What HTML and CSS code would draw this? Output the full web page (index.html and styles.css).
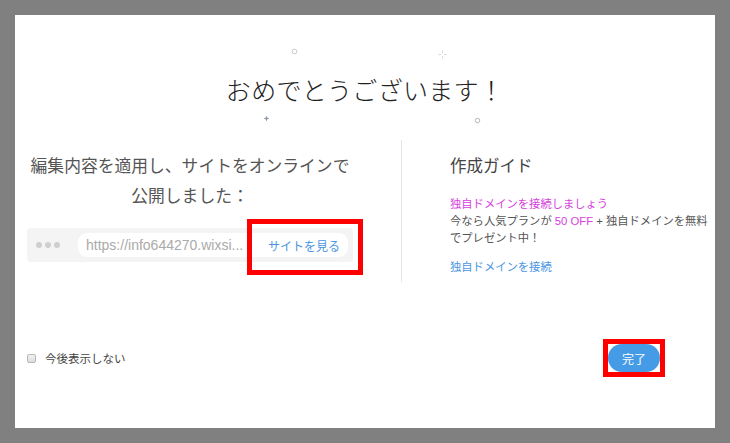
FILE: index.html
```html
<!DOCTYPE html>
<html lang="ja">
<head>
<meta charset="utf-8">
<link rel="stylesheet" href="styles.css">
</head>
<body>
<div class="dialog">
  <div class="title-wrap">
    <h1 class="title">おめでとうございます！</h1>
    <svg class="deco deco-c1" width="7" height="7" viewBox="0 0 7 7"><circle cx="3.5" cy="3.5" r="2.3" fill="none" stroke="#c8c8c8" stroke-width="1"/></svg>
    <svg class="deco deco-s1" width="9" height="9" viewBox="0 0 9 9"><path d="M4.5 0.5 V3 M4.5 6 V8.5 M0.5 4.5 H3 M6 4.5 H8.5" stroke="#d8d8d8" stroke-width="1"/></svg>
    <svg class="deco deco-p1" width="7" height="7" viewBox="0 0 7 7"><path d="M3.5 0.5 L4.3 2.7 L6.5 3.5 L4.3 4.3 L3.5 6.5 L2.7 4.3 L0.5 3.5 L2.7 2.7 Z" fill="#8a95a8"/></svg>
    <svg class="deco deco-c2" width="7" height="7" viewBox="0 0 7 7"><circle cx="3.5" cy="3.5" r="2.2" fill="none" stroke="#b5b5b5" stroke-width="1"/></svg>
  </div>
  <div class="columns">
    <div class="col-left">
      <p class="published">編集内容を適用し、サイトをオンラインで<br>公開しました：</p>
      <div class="urlbar">
        <div class="dots"><span></span><span></span><span></span></div>
        <div class="pill">
          <span class="url">https://info644270.wixsi...</span>
          <span class="view">サイトを見る</span>
        </div>
        <div class="mark mark-view"></div>
      </div>
    </div>
    <div class="col-right">
      <h2 class="guide">作成ガイド</h2>
      <p class="promo"><span class="pink">独自ドメインを接続しましょう</span><br>今なら人気プランが <span class="pink">50 OFF</span> + 独自ドメインを無料<br>でプレゼント中！</p>
      <a class="link">独自ドメインを接続</a>
    </div>
  </div>
  <div class="footer">
    <label class="check"><span class="box"></span>今後表示しない</label>
    <div class="done-wrap">
      <button class="done">完了</button>
      <div class="mark mark-done"></div>
    </div>
  </div>
</div>
</body>
</html>
```
FILE: styles.css
```css
* { box-sizing: border-box; }
html, body { margin: 0; padding: 0; }
body {
  background: #808080;
  width: 730px;
  height: 443px;
  overflow: hidden;
  font-family: "Liberation Sans", "Noto Sans CJK JP", sans-serif;
}
.dialog {
  margin: 15px;
  width: 700px;
  height: 413px;
  background: #fff;
  position: relative;
  display: flex;
  flex-direction: column;
}
.title-wrap {
  position: relative;
  padding-top: 56px;
  height: 125px;
}
.title {
  margin: 0;
  text-align: center;
  font-family: "Noto Sans CJK JP", sans-serif;
  font-weight: 300;
  font-size: 25px;
  line-height: 36px;
  color: #222;
  letter-spacing: 0.3px;
}
.deco { position: absolute; }
.deco-c1 { left: 276px; top: 33px; }
.deco-s1 { left: 423px; top: 35px; }
.deco-p1 { left: 248px; top: 100px; }
.deco-c2 { left: 459px; top: 102px; }

.columns {
  display: flex;
  height: 142px;
}
.col-left {
  width: 386px;
  padding: 10px 48px 0 12px;
}
.published {
  margin: 0;
  text-align: center;
  font-family: "Noto Sans CJK JP", sans-serif;
  font-size: 16.8px;
  line-height: 30px;
  color: #555;
  white-space: nowrap;
}
.urlbar {
  position: relative;
  margin-top: 18px;
  height: 34px;
  width: 326px;
  background: #f4f4f4;
  border-radius: 4px;
  display: flex;
  align-items: center;
  padding: 0 6px 0 8px;
}
.dots { display: flex; gap: 3px; width: 43px; padding-left: 1px; flex-shrink: 0; }
.dots span { width: 6px; height: 6px; border-radius: 50%; background: #cfcfcf; }
.pill {
  flex: 1;
  height: 24px;
  background: #fff;
  border-radius: 9px;
  display: flex;
  align-items: center;
  padding: 0 8px 0 8px;
}
.url {
  width: 172px;
  flex-shrink: 0;
  white-space: nowrap;
  font-size: 14px;
  color: #aaa;
}
.view {
  margin-left: 10px;
  flex-shrink: 0;
  white-space: nowrap;
  font-family: "Noto Sans CJK JP", sans-serif;
  font-size: 12px;
  color: #4a95e3;
}
.mark {
  position: absolute;
  border: 5px solid #ff0000;
}
.mark-view { left: 220px; top: -9px; width: 116px; height: 56px; }

.col-right {
  flex: 1;
  border-left: 1px solid #e6e6e6;
  padding: 10px 0 0 48px;
}
.guide {
  margin: 0;
  font-family: "Noto Sans CJK JP", sans-serif;
  font-weight: 400;
  font-size: 16.5px;
  line-height: 30px;
  color: #444;
}
.promo {
  margin: 16px 0 0;
  font-size: 11.3px;
  line-height: 17px;
  color: #555;
  white-space: nowrap;
}
.pink { color: #d63fe0; }
.link {
  display: block;
  margin-top: 12px;
  font-size: 11.3px;
  line-height: 17px;
  color: #4a95e3;
}
.footer {
  margin-top: 62px;
  height: 28px;
  display: flex;
  align-items: center;
  justify-content: space-between;
  padding: 0 55px 0 12px;
}
.check {
  display: flex;
  align-items: center;
  font-size: 11.5px;
  color: #444;
}
.box {
  width: 9px;
  height: 9px;
  border: 1px solid #b8b8b8;
  border-radius: 2px;
  background: linear-gradient(#f3f3f3, #dcdcdc);
  margin-right: 9px;
}
.done-wrap { position: relative; }
.done {
  display: block;
  width: 52px;
  height: 28px;
  border: none;
  border-radius: 14px;
  background: #469be6;
  color: #fff;
  font-family: "Noto Sans CJK JP", sans-serif;
  font-size: 12px;
  padding: 0;
}
.mark-done { left: -5px; top: -5px; width: 62px; height: 38px; }
```
